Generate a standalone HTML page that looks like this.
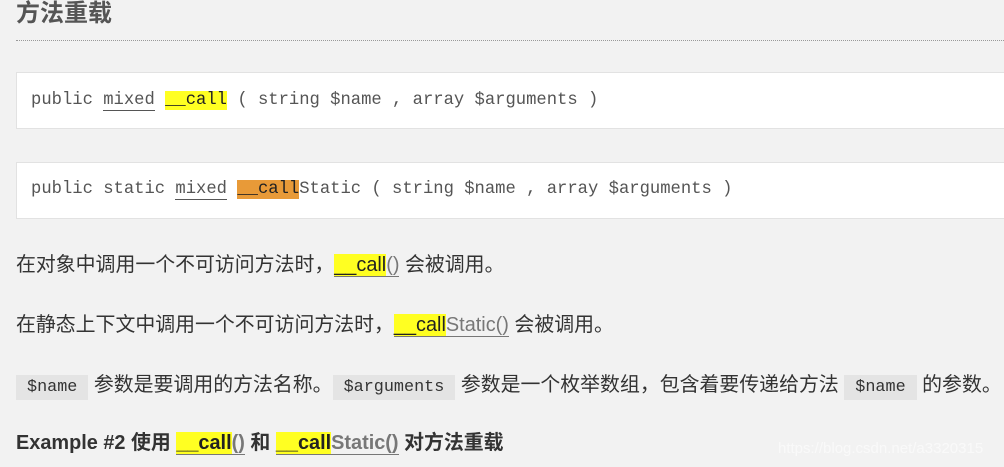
<!DOCTYPE html>
<html><head><meta charset="utf-8"><style>
body{margin:0;width:1004px;height:467px;background:#f2f2f2;overflow:hidden;position:relative;font-family:"Liberation Sans","Noto Sans CJK SC",sans-serif;color:#333}
.a{position:absolute;white-space:nowrap}
h2{position:absolute;left:16px;top:-7px;margin:0;font-size:24px;font-weight:bold;color:#555;font-family:"Liberation Sans","Noto Sans CJK SC",sans-serif}
.hr{position:absolute;left:16px;right:0;top:40px;border-top:1px dotted #999}
.box{position:absolute;left:16px;width:1000px;height:57px;background:#fff;border:1px solid #e2e2e2;box-sizing:border-box}
.m{font-family:"Liberation Mono",monospace;font-size:17.2px;color:#555;line-height:22px}
.u{border-bottom:1px solid #555}
.y{background:#ffff22;color:#222}
.o{background:#e89a38;color:#222}
.p{font-size:19.9px;line-height:26px;color:#333}
.l{border-bottom:1px solid #777;color:#777}
.c{font-family:"Liberation Mono",monospace;font-size:16.8px;background:#e4e4e4;padding:3px 11px;color:#333}
</style></head><body>
<h2>方法重载</h2>
<div class="hr"></div>
<div class="box" style="top:72px"></div>
<div class="a m" style="left:31px;top:90px">public <span class="u">mixed</span> <span class="y">__call</span> ( string $name , array $arguments )</div>
<div class="box" style="top:162px"></div>
<div class="a m" style="left:31px;top:179px">public static <span class="u">mixed</span> <span class="o">__call</span>Static ( string $name , array $arguments )</div>
<div class="a p" style="left:16px;top:252px">在对象中调用一个不可访问方法时，<span class="l"><span class="y">__call</span>()</span> 会被调用。</div>
<div class="a p" style="left:16px;top:312px">在静态上下文中调用一个不可访问方法时，<span class="l"><span class="y">__call</span>Static()</span> 会被调用。</div>
<div class="a p" style="left:16px;top:372px"><span class="c">$name</span> 参数是要调用的方法名称。<span class="c">$arguments</span> 参数是一个枚举数组，包含着要传递给方法 <span class="c">$name</span> 的参数。</div>
<div class="a p" style="left:16px;top:430px;font-weight:bold;color:#333">Example #2 使用 <span class="l"><span class="y">__call</span>()</span> 和 <span class="l"><span class="y">__call</span>Static()</span> 对方法重载</div>
<div class="a" style="left:778px;top:440px;font-size:15px;color:#fff;opacity:.6">https://blog.csdn.net/a3320315</div>
</body></html>
